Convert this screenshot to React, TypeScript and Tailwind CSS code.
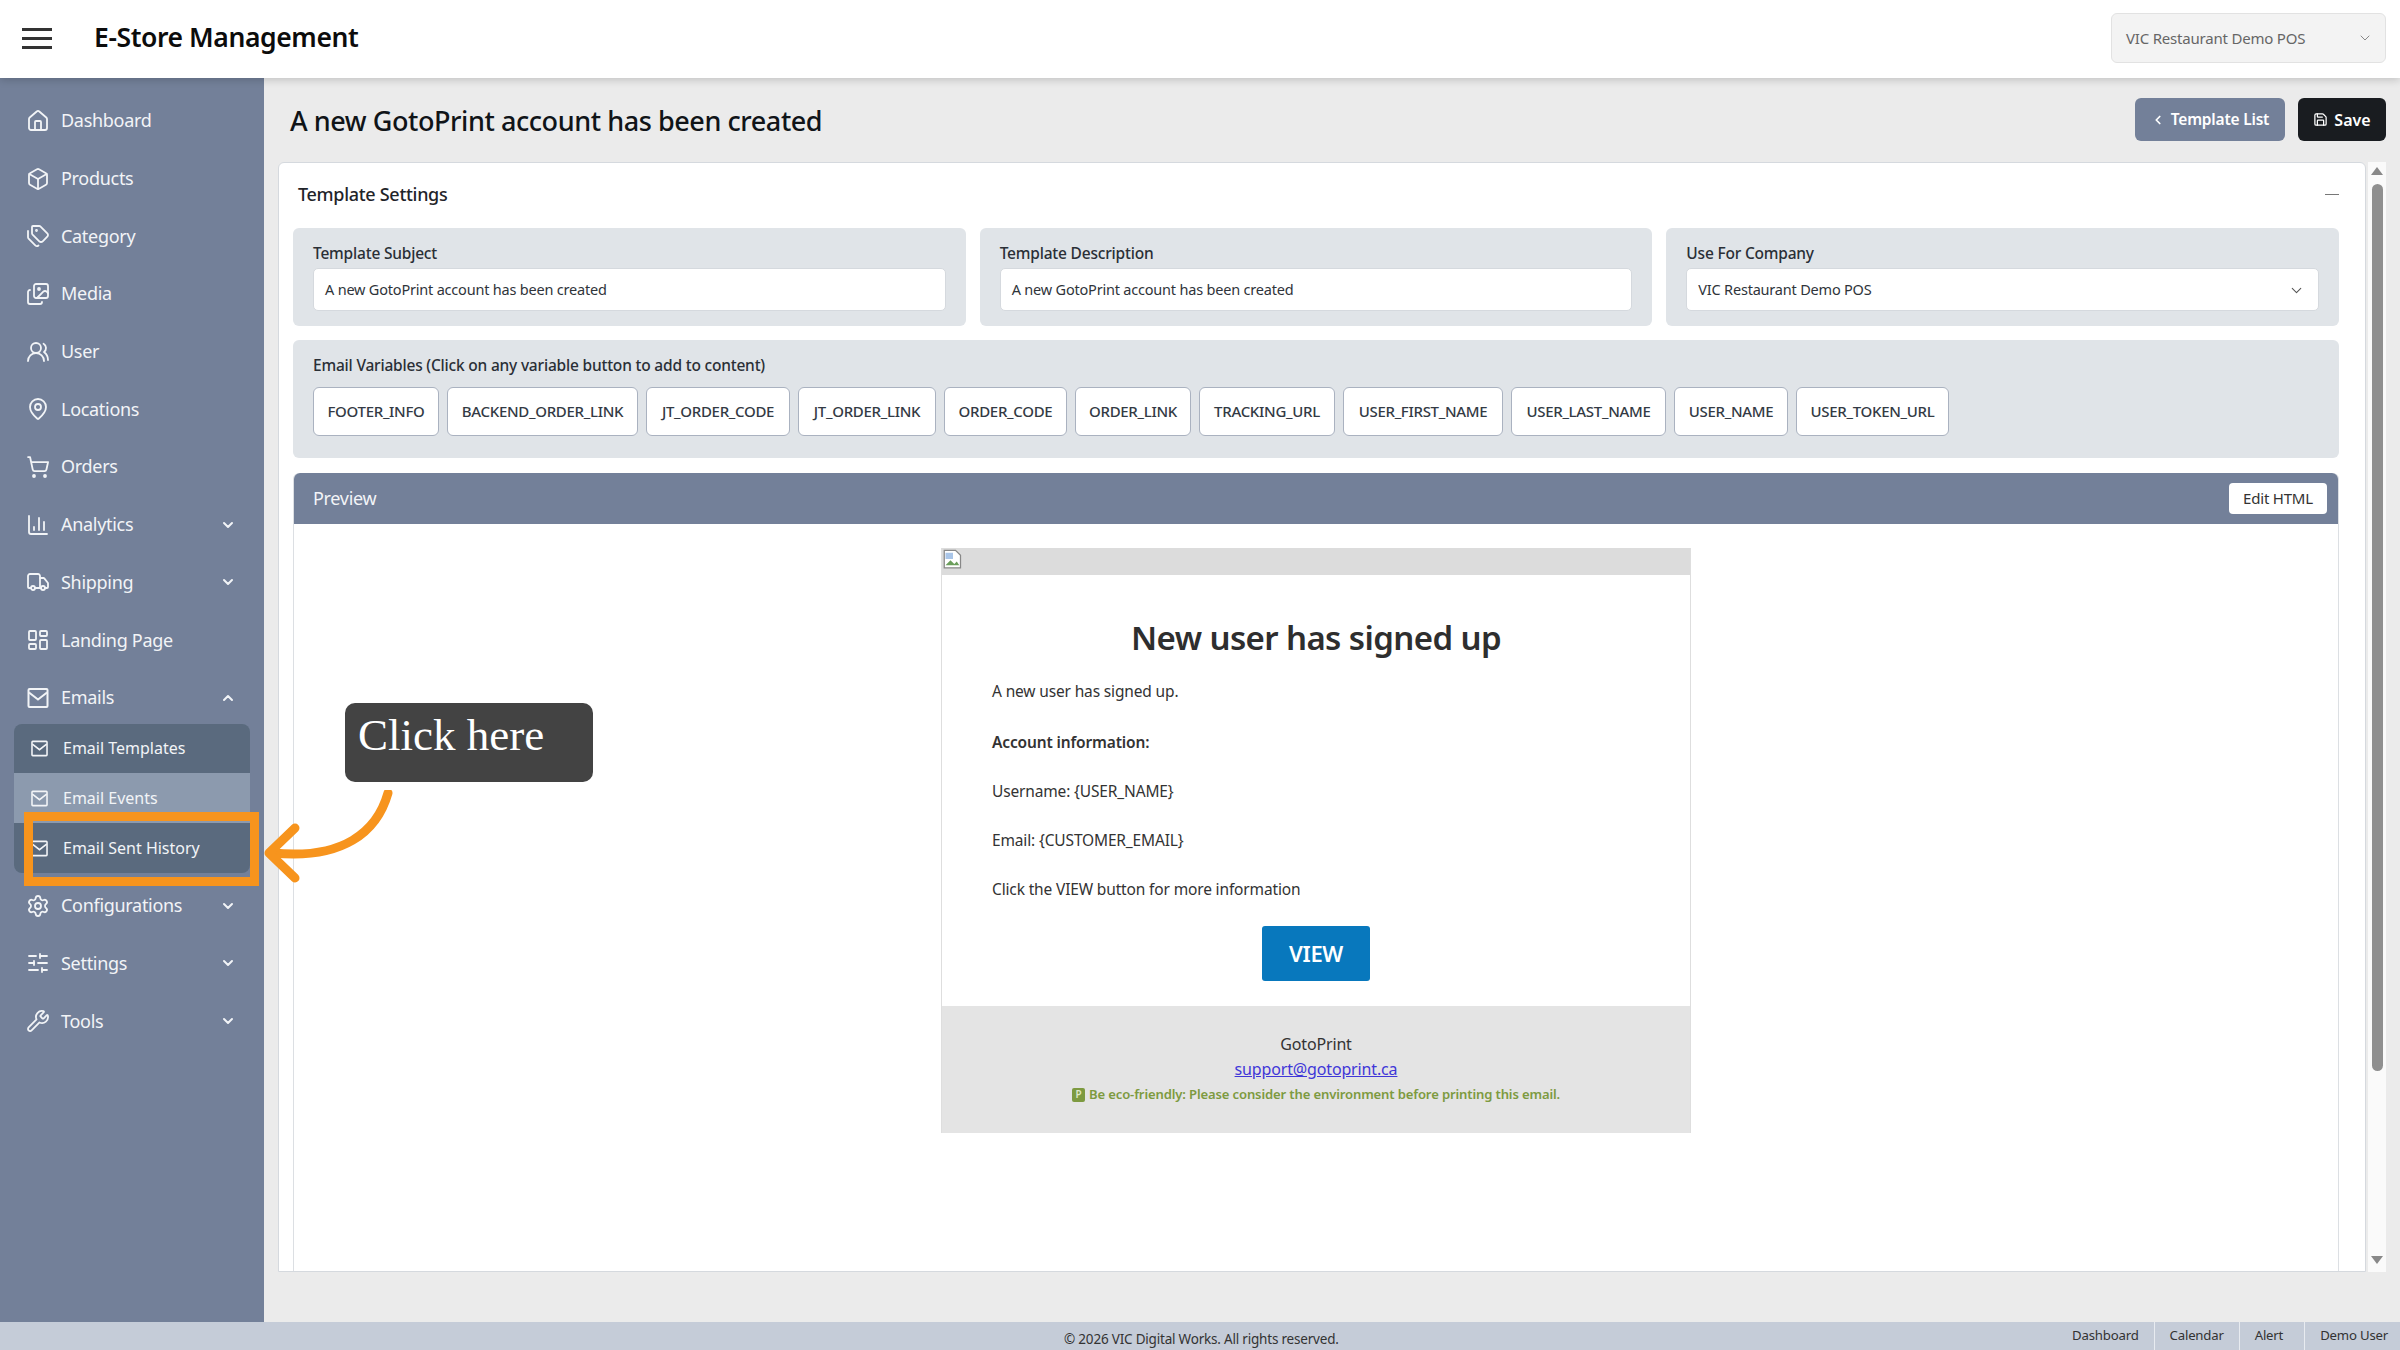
import { ChevronDown, ChevronLeft, ChevronUp, Box, ChartColumn, House, ImagesIcon, LayoutDashboard, MapPin, Save, Settings, ShoppingCart, SlidersHorizontal, Tags, Truck, UsersRound, Wrench } from "lucide-react";
import type { ComponentType } from "react";

type IconType = ComponentType<{ className?: string; strokeWidth?: number }>;

function MailIcon({ className }: { className?: string; strokeWidth?: number }) {
  return (
    <svg className={className} viewBox="0 0 24 24" fill="none" stroke="currentColor" strokeWidth={2}>
      <rect x="2.5" y="3" width="19" height="18" rx="1" />
      <path d="M3 6.5l9 7 9-7" />
    </svg>
  );
}

const topItems: { label: string; icon: IconType; chevron?: boolean }[] = [
  { label: "Dashboard", icon: House },
  { label: "Products", icon: Box },
  { label: "Category", icon: Tags },
  { label: "Media", icon: ImagesIcon },
  { label: "User", icon: UsersRound },
  { label: "Locations", icon: MapPin },
  { label: "Orders", icon: ShoppingCart },
  { label: "Analytics", icon: ChartColumn, chevron: true },
  { label: "Shipping", icon: Truck, chevron: true },
  { label: "Landing Page", icon: LayoutDashboard },
];

const bottomItems: { label: string; icon: IconType }[] = [
  { label: "Configurations", icon: Settings },
  { label: "Settings", icon: SlidersHorizontal },
  { label: "Tools", icon: Wrench },
];

const variables = [
  { name: "FOOTER_INFO", w: "w-[126px]" },
  { name: "BACKEND_ORDER_LINK", w: "w-[191px]" },
  { name: "JT_ORDER_CODE", w: "w-[144px]" },
  { name: "JT_ORDER_LINK", w: "w-[138px]" },
  { name: "ORDER_CODE", w: "w-[123px]" },
  { name: "ORDER_LINK", w: "w-[116px]" },
  { name: "TRACKING_URL", w: "w-[136px]" },
  { name: "USER_FIRST_NAME", w: "w-[160px]" },
  { name: "USER_LAST_NAME", w: "w-[155px]" },
  { name: "USER_NAME", w: "w-[114px]" },
  { name: "USER_TOKEN_URL", w: "w-[153px]" },
];

function NavRow({ label, icon: Icon, chevron, up }: { label: string; icon: IconType; chevron?: boolean; up?: boolean }) {
  return (
    <div className="flex h-[57.7px] items-center pl-[26px] pr-[28px] text-[18px] tracking-[-0.3px] text-[#f2f4f7]">
      <Icon className="mr-[11px] h-[24px] w-[24px]" strokeWidth={1.8} />
      <span className="flex-1">{label}</span>
      {chevron && !up && <ChevronDown className="h-[16px] w-[16px]" strokeWidth={3} />}
      {up && <ChevronUp className="h-[16px] w-[16px]" strokeWidth={3} />}
    </div>
  );
}

function SubRow({ label, bg }: { label: string; bg: string }) {
  return (
    <div className={`flex h-[49.8px] items-center pl-[16px] text-[16px] text-[#f2f4f7] ${bg}`}>
      <MailIcon className="mr-[14px] h-[19px] w-[19px]" />
      {label}
    </div>
  );
}

function Field({ label, value, select }: { label: string; value: string; select?: boolean }) {
  return (
    <div className="flex-1 rounded-[6px] bg-[#e0e4e8] px-[20px] pt-[15px]">
      <div className="mb-[5px] text-[15.5px] font-medium leading-[20px] tracking-[-0.2px] text-[#2a2f36]">{label}</div>
      <div className="flex h-[43px] items-center justify-between rounded-[5px] border border-[#d5d9de] bg-white pl-[11px] pr-[13px] pt-[1px] text-[14.5px] tracking-[-0.2px] text-[#2f343a]">
        {value}
        {select && <ChevronDown className="h-[17px] w-[17px] text-[#555]" strokeWidth={1.5} />}
      </div>
    </div>
  );
}

function EmailPreview() {
  return (
    <div className="w-[750px] border-x border-[#dedede] text-[15.5px] tracking-[-0.15px] text-[#333]">
      <div className="relative h-[27px] bg-[#dcdcdc]">
        <svg className="absolute left-[1px] top-[1px] h-[20px] w-[20px]" viewBox="0 0 16 16">
          <path d="M1 1h9l4 4v10H1z" fill="#fff" stroke="#888" />
          <path d="M2 13l4-4 3 3 2-2 2 3z" fill="#6b9e5b" />
          <path d="M2 3h6v5H2z" fill="#a9c5e8" />
        </svg>
      </div>
      <div className="bg-white px-[50px] pb-[25px] pt-[40px]">
        <h2 className="text-center text-[33px] font-semibold leading-[46px] tracking-[-0.6px] text-[#2e2e2e]">New user has signed up</h2>
        <p className="mt-[20px] leading-[20px]">A new user has signed up.</p>
        <p className="mt-[31px] font-semibold leading-[20px]">Account information:</p>
        <p className="mt-[29px] leading-[20px]">Username: {"{USER_NAME}"}</p>
        <p className="mt-[29px] leading-[20px]">Email: {"{CUSTOMER_EMAIL}"}</p>
        <p className="mt-[29px] leading-[20px]">Click the VIEW button for more information</p>
        <div className="mt-[27px] flex justify-center">
          <div className="flex h-[55px] w-[108px] items-center justify-center rounded-[3px] bg-[#0878bd] text-[22px] font-semibold tracking-[-0.3px] text-white">VIEW</div>
        </div>
      </div>
      <div className="flex h-[127px] flex-col items-center bg-[#e4e4e4] pt-[26px] text-center">
        <div className="h-[25px] text-[16px] leading-[25px]">GotoPrint</div>
        <a className="h-[25px] text-[16px] leading-[25px] text-[#3f37d8] underline">support@gotoprint.ca</a>
        <div className="flex h-[25px] items-center text-[13.1px] font-semibold text-[#7d9a40]">
          <span className="mr-[4px] flex h-[14px] w-[13px] items-center justify-center rounded-[2px] bg-[#7d9a40] text-[10px] text-[#dfe8c8]">P</span>
          Be eco-friendly: Please consider the environment before printing this email.
        </div>
      </div>
    </div>
  );
}

export default function App() {
  return (
    <div className="relative flex h-[1350px] w-[2400px] flex-col overflow-hidden bg-[#ebebeb] font-['Noto_Sans',sans-serif]">
      {/* Header */}
      <header className="relative z-10 flex h-[78px] items-center bg-white pb-[2px] pl-[22px] pr-[14px] shadow-[0_2px_8px_rgba(0,0,0,0.18)]">
        <div className="flex w-[30px] flex-col gap-[6px]">
          <div className="h-[3px] bg-[#333]" />
          <div className="h-[3px] bg-[#333]" />
          <div className="h-[3px] bg-[#333]" />
        </div>
        <div className="ml-[42px] flex-1 text-[26.5px] font-semibold tracking-[-0.4px] text-[#0c0c0c]">E-Store Management</div>
        <div className="flex h-[50px] w-[275px] items-center justify-between rounded-[6px] border border-[#e2e2e2] bg-[#f3f3f3] pl-[14px] pr-[12px] text-[15px] tracking-[-0.2px] text-[#666]">
          VIC Restaurant Demo POS
          <ChevronDown className="h-[16px] w-[16px] text-[#888]" strokeWidth={1.5} />
        </div>
      </header>

      <div className="flex min-h-0 flex-1">
        {/* Sidebar */}
        <aside className="w-[264px] bg-[#738099] pt-[14px]">
          {topItems.map((item) => (
            <NavRow key={item.label} {...item} />
          ))}
          <NavRow label="Emails" icon={MailIcon} chevron up />
          <div className="mx-[14px] -mt-[3px] overflow-hidden rounded-[8px]">
            <SubRow label="Email Templates" bg="bg-[#5a6a7e]" />
            <SubRow label="Email Events" bg="bg-[#8c9aae]" />
            <SubRow label="Email Sent History" bg="bg-[#5a6a7e]" />
          </div>
          <div className="h-[4px]" />
          {bottomItems.map((item) => (
            <NavRow key={item.label} {...item} chevron />
          ))}
        </aside>

        {/* Main */}
        <main className="flex min-w-0 flex-1 flex-col pl-[14px] pr-[14px]">
          <div className="flex h-[84px] items-center justify-between pl-[12px]">
            <h1 className="pt-[2px] text-[27px] font-medium tracking-[-0.43px] text-[#101418]">A new GotoPrint account has been created</h1>
            <div className="-mt-[1px] flex gap-[13px]">
              <div className="flex h-[43px] w-[150px] items-center justify-center rounded-[6px] bg-[#738099] text-[15.5px] font-semibold tracking-[-0.2px] text-white">
                <ChevronLeft className="mr-[6px] h-[14px] w-[14px]" strokeWidth={3} />
                Template List
              </div>
              <div className="flex h-[43px] w-[88px] items-center justify-center rounded-[6px] bg-[#191c20] text-[16px] font-semibold text-white">
                <Save className="mr-[6px] h-[15px] w-[15px]" strokeWidth={2} />
                Save
              </div>
            </div>
          </div>

          <div className="flex h-[1110px] gap-[2px]">
            {/* Card */}
            <div className="min-w-0 flex-1 overflow-hidden rounded-t-[6px] border border-[#d5d9de] bg-white">
              <div className="flex h-[65px] items-center justify-between pb-[2px] pl-[19px] pr-[26px]">
                <div className="text-[18px] font-medium tracking-[-0.3px] text-[#1f2429]">Template Settings</div>
                <div className="h-[1px] w-[14px] bg-[#777]" />
              </div>
              <div className="pl-[14px] pr-[26px]">
                <div className="flex h-[98px] gap-[14px]">
                  <Field label="Template Subject" value="A new GotoPrint account has been created" />
                  <Field label="Template Description" value="A new GotoPrint account has been created" />
                  <Field label="Use For Company" value="VIC Restaurant Demo POS" select />
                </div>
                <div className="mt-[14px] h-[118px] rounded-[6px] bg-[#e0e4e8] px-[20px] pt-[15px]">
                  <div className="mb-[12px] text-[15.5px] font-medium leading-[20px] tracking-[-0.2px] text-[#2a2f36]">Email Variables (Click on any variable button to add to content)</div>
                  <div className="flex gap-[8px]">
                    {variables.map((v) => (
                      <div key={v.name} className={`flex h-[49px] items-center justify-center rounded-[6px] border border-[#aab2c0] bg-white text-[15px] font-medium tracking-[-0.3px] text-[#333a44] ${v.w}`}>
                        {v.name}
                      </div>
                    ))}
                  </div>
                </div>
                <div className="mt-[15px] h-[800px] rounded-t-[6px] border-x border-[#dcdfe3]">
                  <div className="flex h-[51px] items-center justify-between rounded-t-[6px] bg-[#738099] pl-[19px] pr-[11px]">
                    <span className="text-[18px] tracking-[-0.3px] text-[#f2f4f7]">Preview</span>
                    <div className="flex h-[31px] w-[98px] items-center justify-center rounded-[4px] bg-white text-[15px] tracking-[-0.2px] text-[#333]">Edit HTML</div>
                  </div>
                  <div className="flex justify-center pt-[24px]">
                    <EmailPreview />
                  </div>
                </div>
              </div>
            </div>
            {/* Scrollbar */}
            <div className="flex w-[18px] flex-col items-center bg-[#fafafa] pt-[5px]">
              <div className="h-0 w-0 border-x-[6px] border-b-[8px] border-x-transparent border-b-[#888]" />
              <div className="mt-[9px] h-[887px] w-[11px] rounded-full bg-[#8f8f8f]" />
              <div className="mt-auto mb-[8px] h-0 w-0 border-x-[6px] border-t-[8px] border-x-transparent border-t-[#888]" />
            </div>
          </div>
          <div className="flex-1" />
        </main>
      </div>

      {/* Footer */}
      <footer className="relative flex h-[28px] items-center justify-end bg-[#c5ccd8] pr-[12px] text-[13.2px] tracking-[-0.2px] text-[#333]">
        <div className="absolute left-[1064px] top-[6px] text-[13.5px] leading-[22px]">© 2026 VIC Digital Works. All rights reserved.</div>
        <div className="flex h-full items-center border-r border-[#e8ebf0] pr-[15px]">Dashboard</div>
        <div className="flex h-full items-center border-r border-[#e8ebf0] px-[15px]">Calendar</div>
        <div className="flex h-full items-center border-r border-[#e8ebf0] pl-[15px] pr-[21px]">Alert</div>
        <div className="flex h-full items-center pl-[15px]">Demo User</div>
      </footer>

      {/* Annotation overlay */}
      <div className="absolute left-[345px] top-[703px] h-[79px] w-[248px] rounded-[10px] bg-[#434343] pl-[13px] pt-[1px] font-['Liberation_Serif',serif] text-[45px] leading-[62px] text-white">Click here</div>
      <div className="absolute left-[24px] top-[812px] h-[74px] w-[235px] border-[9px] border-[#f7941d]" />
      <svg className="absolute left-[259px] top-[790px] h-[100px] w-[140px]" viewBox="0 0 140 100" fill="none" stroke="#f7941d" strokeWidth={9} strokeLinecap="round" strokeLinejoin="round">
        <path d="M129 3 C118 42 84 70 14 63" />
        <path d="M36 38 L10 63 L36 88" />
      </svg>
    </div>
  );
}
